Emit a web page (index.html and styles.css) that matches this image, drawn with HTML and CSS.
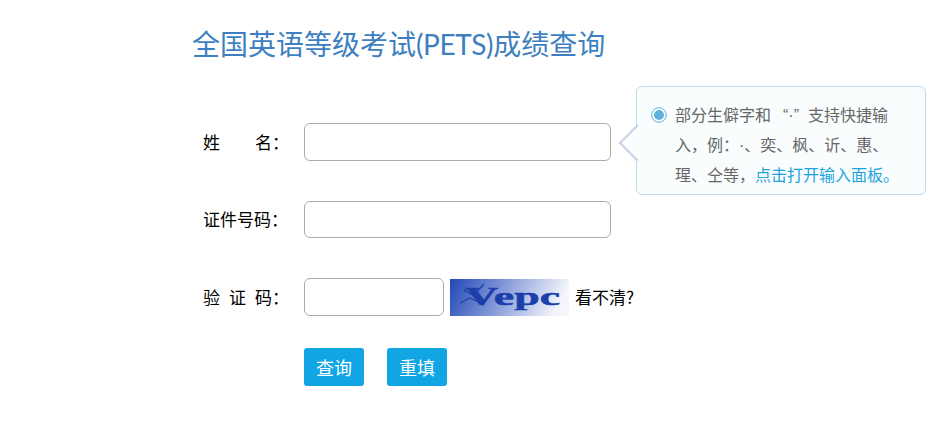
FILE: index.html
```html
<!DOCTYPE html>
<html lang="zh-CN">
<head>
    <meta charset="UTF-8">
    <title>全国英语等级考试(PETS)成绩查询</title>
    <link rel="stylesheet" href="styles.css">
</head>
<body>
    <div class="query-container">
        <h1 class="query-title">全国英语等级考试<span class="title-latin">(PETS)</span>成绩查询</h1>

        <form class="query-form">
            <div class="form-group">
                <label for="name"><span class="space-wide">姓</span>名：</label>
                <input type="text" id="name" class="input-long">
            </div>

            <div class="form-group form-group-cert">
                <label for="cert">证件号码：</label>
                <input type="text" id="cert" class="input-long">
            </div>

            <div class="form-group">
                <label for="code"><span class="space-mid">验证</span>码：</label>
                <input type="text" id="code" class="input-short">
                <svg class="captcha" viewBox="0 0 119 37" role="img" aria-label="验证码">
                    <defs>
                        <linearGradient id="captcha-bg" x1="0" y1="0" x2="1" y2="0.15">
                            <stop offset="0" stop-color="#2148b6"/>
                            <stop offset="0.45" stop-color="#7f95d6"/>
                            <stop offset="1" stop-color="#f4f6fc"/>
                        </linearGradient>
                    </defs>
                    <rect width="119" height="37" fill="url(#captcha-bg)"/>
                    <path d="M10 24 L20 19 L34 26 M14 11 L26 18 M34 5 L26 14" fill="none" stroke="#1e3fa8" stroke-width="1.2"/>
                    <text x="15" y="26" class="captcha-text" textLength="95" lengthAdjust="spacingAndGlyphs">Vepc</text>
                </svg>
                <a class="captcha-link">看不清?</a>
            </div>

            <div class="form-buttons">
                <button type="button" class="btn">查询</button>
                <button type="button" class="btn">重填</button>
            </div>
        </form>

        <div class="tip">
            <svg class="tip-icon" viewBox="0 0 16 16">
                <circle cx="8" cy="8" r="7.3" fill="#fff" stroke="#5cb2dc" stroke-width="1"/>
                <circle cx="8" cy="8" r="5" fill="#5cb2dc"/>
            </svg>
            <p class="tip-text">部分生僻字和<span class="tip-quote">“·”</span>支持快捷输入，例：<span class="tip-dot">·</span>、奕、枫、䜣、惠、瑆、仝等，<a class="tip-link">点击打开输入面板。</a></p>
        </div>
    </div>
</body>
</html>
```

FILE: styles.css
```css
* {
    margin: 0;
    padding: 0;
    box-sizing: border-box;
}

body {
    font-family: "Noto Sans CJK SC", "Noto Sans", sans-serif;
    text-spacing-trim: space-all;
    background: #fff;
    color: #000;
    height: 432px;
    overflow: hidden;
}

.query-container {
    position: relative;
    padding: 23px 0 0 192px;
}

.query-title {
    height: 42px;
    line-height: 42px;
    font-family: Lato, "Noto Sans CJK SC", sans-serif;
    font-size: 28px;
    font-weight: 400;
    color: #3d7fc1;
    margin-bottom: 58px;
}

.title-latin {
    letter-spacing: -0.4px;
}

.form-group {
    display: flex;
    align-items: center;
    height: 38px;
    margin-bottom: 40px;
}

.form-group-cert {
    height: 37px;
}

.form-group label {
    width: 112px;
    padding: 0 0 2px 11px;
    font-size: 17px;
    white-space: nowrap;
}

.space-wide {
    letter-spacing: 35px;
}

.space-mid {
    letter-spacing: 9px;
}

.form-group input {
    height: 100%;
    border: 1px solid #aaa;
    border-radius: 6px;
    background: #fff;
}

.input-long {
    width: 307px;
}

.input-short {
    width: 140px;
}

.captcha {
    width: 119px;
    height: 37px;
    margin-left: 6px;
}

.captcha-text {
    font-family: "Liberation Serif", serif;
    font-size: 25px;
    font-weight: 700;
    fill: #1c3eaa;
    stroke: #1c3eaa;
    stroke-width: 0.5;
}

.captcha-link {
    margin-left: 6px;
    padding-bottom: 2px;
    font-size: 17px;
}

.form-buttons {
    display: flex;
    gap: 23px;
    margin-top: -8px;
    padding-left: 112px;
}

.btn {
    width: 60px;
    height: 38px;
    border: none;
    border-radius: 3px;
    background: #12a5e4;
    color: #fff;
    font-family: inherit;
    font-size: 18px;
}

.tip {
    position: absolute;
    left: 636px;
    top: 86px;
    width: 290px;
    height: 109px;
    display: flex;
    gap: 8px;
    padding: 13px 23px 0 14px;
    background: #f9fdfe;
    border: 1px solid #c4d9ea;
    border-radius: 6px;
}

/* little arrow pointing at the name input */
.tip::before {
    content: "";
    position: absolute;
    left: -13px;
    top: 43px;
    width: 24px;
    height: 24px;
    transform: rotate(45deg);
    background: #f9fdfe;
    border-left: 2px solid #c9d1e8;
    border-bottom: 2px solid #c9d1e8;
}

.tip-icon {
    position: relative;
    flex: none;
    width: 16px;
    height: 16px;
    margin-top: 7px;
}

.tip-text {
    position: relative;
    font-size: 16px;
    line-height: 29px;
    color: #666;
}

.tip-quote {
    margin: 0 9px 0 12px;
    font-family: "Liberation Sans", sans-serif;
}

.tip-dot {
    font-family: "Liberation Sans", sans-serif;
}

.tip-link {
    color: #1fa3de;
}
```
